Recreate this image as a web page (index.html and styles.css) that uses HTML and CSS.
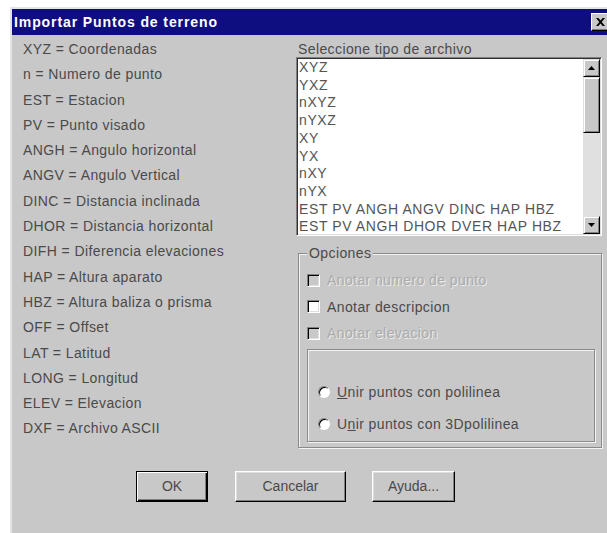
FILE: index.html
```html
<!DOCTYPE html>
<html lang="es">
<head>
<meta charset="utf-8">
<title>Importar Puntos de terreno</title>
<link rel="stylesheet" href="styles.css">
</head>
<body>
<div class="window">
  <div class="titlebar">
    <span class="title">Importar Puntos de terreno</span>
    <button class="close" type="button" aria-label="Cerrar">
      <svg width="9" height="8" viewBox="0 0 9 8"><path d="M0 0h2.4l2.1 2.6L6.6 0H9L5.7 4 9 8H6.6L4.5 5.4 2.4 8H0l3.3-4z" fill="#000"/></svg>
    </button>
  </div>

  <div class="body">
    <ul class="legend">
      <li>XYZ = Coordenadas</li>
      <li>n = Numero de punto</li>
      <li>EST = Estacion</li>
      <li>PV = Punto visado</li>
      <li>ANGH = Angulo horizontal</li>
      <li>ANGV = Angulo Vertical</li>
      <li>DINC = Distancia inclinada</li>
      <li>DHOR = Distancia horizontal</li>
      <li>DIFH = Diferencia elevaciones</li>
      <li>HAP = Altura aparato</li>
      <li>HBZ = Altura baliza o prisma</li>
      <li>OFF = Offset</li>
      <li>LAT = Latitud</li>
      <li>LONG = Longitud</li>
      <li>ELEV = Elevacion</li>
      <li>DXF = Archivo ASCII</li>
    </ul>

    <div class="side">
      <span class="list-label">Seleccione tipo de archivo</span>
      <div class="listbox">
        <ul class="items">
          <li>XYZ</li>
          <li>YXZ</li>
          <li>nXYZ</li>
          <li>nYXZ</li>
          <li>XY</li>
          <li>YX</li>
          <li>nXY</li>
          <li>nYX</li>
          <li>EST PV ANGH ANGV DINC HAP HBZ</li>
          <li>EST PV ANGH DHOR DVER HAP HBZ</li>
        </ul>
        <div class="scrollbar">
          <div class="sb-btn">
            <svg width="7" height="4" viewBox="0 0 7 4"><path d="M3.5 0 7 4H0z" fill="#000"/></svg>
          </div>
          <div class="sb-thumb"></div>
          <div class="sb-track"></div>
          <div class="sb-btn">
            <svg width="7" height="4" viewBox="0 0 7 4"><path d="M0 0h7L3.5 4z" fill="#000"/></svg>
          </div>
        </div>
      </div>

      <fieldset class="group">
        <legend>Opciones</legend>
        <div class="check disabled"><span class="box"></span><span>Anotar numero de punto</span></div>
        <div class="check"><span class="box"></span><span>Anotar descripcion</span></div>
        <div class="check disabled"><span class="box"></span><span>Anotar elevacion</span></div>
        <div class="inner">
          <div class="radio"><span class="dot"></span><span><u>U</u>nir puntos con polilinea</span></div>
          <div class="radio"><span class="dot"></span><span>U<u>n</u>ir puntos con 3Dpolilinea</span></div>
        </div>
      </fieldset>
    </div>
  </div>

  <div class="buttons">
    <button class="btn btn-ok default" type="button">OK</button>
    <button class="btn btn-cancel" type="button">Cancelar</button>
    <button class="btn btn-help" type="button">Ayuda...</button>
  </div>
</div>
</body>
</html>
```

FILE: styles.css
```css
html, body {
  margin: 0;
  overflow: hidden;
  background: #fff;
}

body {
  font-family: "Liberation Sans", Arial, sans-serif;
  font-size: 14px;
  letter-spacing: 0.4px;
  color: #4a4a4a;
}

/* dialog frame */
.window {
  margin: 7px 0 0 10px;
  width: 600px;
  height: 540px;
  box-sizing: border-box;
  background: #c8c8c8;
  border-top: 2px solid #e4e4e4;
  border-left: 2px solid #e4e4e4;
}

.titlebar {
  height: 26px;
  background: #0e0e80;
  display: flex;
  align-items: center;
  justify-content: space-between;
  padding: 0 1px 0 2px;
  color: #fff;
}

.title {
  font-weight: bold;
  letter-spacing: 0.9px;
}

.close {
  width: 18px;
  height: 18px;
  box-sizing: border-box;
  padding: 0;
  background: #c8c8c8;
  border: 1px solid;
  border-color: #fff #000 #000 #fff;
  box-shadow: inset -1px -1px #808080;
  display: flex;
  align-items: center;
  justify-content: center;
}

/* two columns: field legend on the left, file type and options on the right */
.body {
  display: grid;
  grid-template-columns: 284px 306px;
  align-items: start;
}

.legend {
  list-style: none;
  margin: 0;
  padding: 2px 0 0 11px;
}

.legend li {
  height: 25.3px;
  line-height: 25.3px;
  white-space: nowrap;
}

.side {
  padding-top: 6px;
}

.list-label {
  display: block;
  line-height: 16px;
  padding-left: 2px;
}

/* sunken list box */
.listbox {
  height: 179px;
  box-sizing: border-box;
  display: flex;
  padding: 1px;
  background: #fff;
  border: 1px solid;
  border-color: #808080 #fff #fff #808080;
  box-shadow: inset 1px 1px #303030, inset -1px -1px #dcdcdc;
}

.items {
  flex: 1;
  list-style: none;
  margin: 0;
  padding: 0 0 0 1px;
  overflow: hidden;
  line-height: 17.7px;
  letter-spacing: 0.6px;
  color: #555;
  white-space: nowrap;
}

.scrollbar {
  width: 17px;
  display: flex;
  flex-direction: column;
}

.sb-btn,
.sb-thumb {
  box-sizing: border-box;
  background: #c8c8c8;
  border: 1px solid;
  border-color: #dfdfdf #000 #000 #dfdfdf;
  box-shadow: inset 1px 1px #fff, inset -1px -1px #808080;
}

.sb-btn {
  height: 18px;
  display: flex;
  align-items: center;
  justify-content: center;
}

.sb-thumb {
  height: 56px;
}

.sb-track {
  flex: 1;
  background: #e0e0e0;
}

/* etched group boxes */
.group {
  margin: 9px 0 0 2px;
  padding: 0 6px 5px 8px;
  min-width: 0;
  border: 1px solid #8a8a8a;
  box-shadow: inset 1px 1px #f2f2f2, 1px 1px #f2f2f2;
}

.group legend {
  padding: 0 2px;
  line-height: 16px;
  background: #c8c8c8;
}

.check {
  display: flex;
  align-items: center;
  gap: 7px;
  height: 26.5px;
  white-space: nowrap;
}

.check:first-of-type {
  margin-top: 6px;
}

.box {
  width: 13px;
  height: 13px;
  box-sizing: border-box;
  background: #fff;
  border: 1px solid;
  border-color: #808080 #fff #fff #808080;
  box-shadow: inset 1px 1px #000, inset -1px -1px #dfdfdf;
}

.check.disabled .box {
  background: #c8c8c8;
}

.check.disabled span:last-child {
  color: #ababab;
  text-shadow: 1px 1px 0 #ececec;
}

.inner {
  margin-top: 2px;
  padding: 26px 0 1px 10px;
  border: 1px solid #8a8a8a;
  box-shadow: inset 1px 1px #f2f2f2, 1px 1px #f2f2f2;
}

.radio {
  display: flex;
  align-items: center;
  gap: 7px;
  height: 32px;
  white-space: nowrap;
}

.dot {
  width: 12px;
  height: 12px;
  box-sizing: border-box;
  border-radius: 50%;
  background: #fff;
  border: 1px solid;
  border-color: #808080 #fff #fff #808080;
  box-shadow: inset 1px 1px #000;
}

/* push buttons */
.buttons {
  display: flex;
  margin-top: 23px;
  padding-left: 124px;
}

.btn {
  height: 31px;
  box-sizing: border-box;
  padding: 0;
  font: inherit;
  color: #4a4a4a;
  background: #c8c8c8;
  border: 1px solid;
  border-color: #fff #000 #000 #fff;
  box-shadow: inset -1px -1px #808080, inset 1px 1px #dfdfdf;
}

.btn.default {
  border-color: #000;
  box-shadow: inset 1px 1px #fff, inset -1px -1px #000, inset -2px -2px #808080;
}

.btn-ok {
  width: 72px;
}

.btn-cancel {
  width: 111px;
  margin-left: 27px;
}

.btn-help {
  width: 83px;
  margin-left: 26px;
}
```
